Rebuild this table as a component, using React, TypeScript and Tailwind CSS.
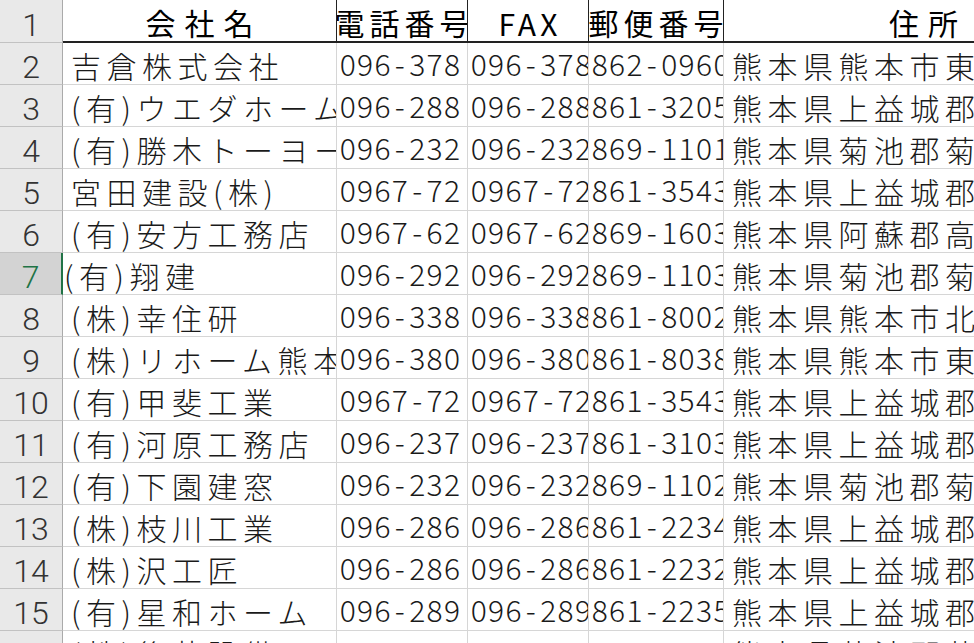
import React from "react";

type Row = [string, string, string, string, string];

const rows: Row[] = [
  ["吉倉株式会社", "096-378", "096-378", "862-0960", "熊本県熊本市東"],
  ["(有)ウエダホーム", "096-288", "096-288", "861-3205", "熊本県上益城郡"],
  ["(有)勝木トーヨー住宅", "096-232", "096-232", "869-1101", "熊本県菊池郡菊"],
  ["宮田建設(株)", "0967-72", "0967-72", "861-3543", "熊本県上益城郡"],
  ["(有)安方工務店", "0967-62", "0967-62", "869-1603", "熊本県阿蘇郡高"],
  ["(有)翔建", "096-292", "096-292", "869-1103", "熊本県菊池郡菊"],
  ["(株)幸住研", "096-338", "096-338", "861-8002", "熊本県熊本市北"],
  ["(株)リホーム熊本", "096-380", "096-380", "861-8038", "熊本県熊本市東"],
  ["(有)甲斐工業", "0967-72", "0967-72", "861-3543", "熊本県上益城郡"],
  ["(有)河原工務店", "096-237", "096-237", "861-3103", "熊本県上益城郡"],
  ["(有)下園建窓", "096-232", "096-232", "869-1102", "熊本県菊池郡菊"],
  ["(株)枝川工業", "096-286", "096-286", "861-2234", "熊本県上益城郡"],
  ["(株)沢工匠", "096-286", "096-286", "861-2232", "熊本県上益城郡"],
  ["(有)星和ホーム", "096-289", "096-289", "861-2235", "熊本県上益城郡"],
  ["(株)後藤設備", "", "", "", "熊本県菊池郡菊"],
];

const JP = "font-['Noto_Sans_CJK_JP',sans-serif] font-light text-[30px] leading-none tracking-[5.5px] text-[#1a1a1a]";
const NUM = "font-['Noto_Sans_CJK_JP',sans-serif] font-light text-[30px] leading-none text-[#1a1a1a] flex";

function Num({ v }: { v: string }) {
  return (
    <span className={NUM}>
      {v.split("").map((c, i) => (
        <span key={i} className="inline-block w-[17.4px] shrink-0 text-center">
          {c}
        </span>
      ))}
    </span>
  );
}

function RowHeader({ n, active }: { n: number; active?: boolean }) {
  return (
    <div
      className={
        "w-[63px] shrink-0 flex items-end justify-center pb-[1px] border-b border-b-[#c2c2c2] font-['Roboto',sans-serif] font-light text-[32px] leading-none " +
        (active
          ? "bg-[#d3d3d3] text-[#217346] border-r-2 border-r-[#217346]"
          : "bg-[#e9e9e9] text-[#333] border-r border-r-[#aaaaaa]")
      }
    >
      {n}
    </div>
  );
}

function DataRow({ n, r, active }: { n: number; r: Row; active?: boolean }) {
  const cell = "shrink-0 overflow-hidden whitespace-nowrap flex items-end border-r border-r-[#d6d6d6] border-b border-b-[#d6d6d6]";
  return (
    <div className="flex h-[42px]">
      <RowHeader n={n} active={active} />
      <div className={cell + " w-[274px] pb-[4px] " + (active ? "pl-[1px]" : "pl-[8px]")}>
        <span className={JP}>{r[0]}</span>
      </div>
      <div className={cell + " w-[131px] pb-[6px] pl-[2px]"}>
        <Num v={r[1]} />
      </div>
      <div className={cell + " w-[121px] pb-[6px] pl-[2px]"}>
        <Num v={r[2]} />
      </div>
      <div className={cell + " w-[135px] pb-[6px] pl-[2px]"}>
        <Num v={r[3]} />
      </div>
      <div className={cell + " w-[400px] pb-[4px] pl-[8px]"}>
        <span className={JP}>{r[4]}</span>
      </div>
    </div>
  );
}

export default function App() {
  const head = "shrink-0 overflow-hidden whitespace-nowrap flex items-end justify-center border-r border-r-[#222] border-b-2 border-b-[#222]";
  const hjp = "font-['Noto_Sans_CJK_JP',sans-serif] text-[30px] leading-none text-black";
  return (
    <div className="w-[974px] h-[643px] overflow-hidden bg-white">
      <div className="flex h-[43px]">
        <div className="w-[63px] shrink-0 flex items-end justify-center pb-[1px] bg-[#e9e9e9] text-[#333] border-r border-r-[#aaaaaa] border-b border-b-[#c2c2c2] font-['Roboto',sans-serif] font-light text-[32px] leading-none">
          1
        </div>
        <div className={head + " w-[274px] pb-[4px]"}>
          <span className={hjp + " tracking-[9px] pl-[9px]"}>会社名</span>
        </div>
        <div className={head + " w-[131px] pb-[4px]"}>
          <span className={hjp + " tracking-[5px] pl-[5px]"}>電話番号</span>
        </div>
        <div className={head + " w-[121px] pb-[3px]"}>
          <span className="font-['Noto_Sans_CJK_JP',sans-serif] text-[30px] leading-none tracking-[4px] pl-[4px] text-black">FAX</span>
        </div>
        <div className={head + " w-[135px] pb-[4px]"}>
          <span className={hjp + " tracking-[5px] pl-[5px]"}>郵便番号</span>
        </div>
        <div className={head + " w-[400px] pb-[4px]"}>
          <span className={hjp + " tracking-[9px] pl-[9px]"}>住所</span>
        </div>
      </div>
      {rows.map((r, i) => (
        <DataRow key={i} n={i + 2} r={r} active={i + 2 === 7} />
      ))}
    </div>
  );
}
